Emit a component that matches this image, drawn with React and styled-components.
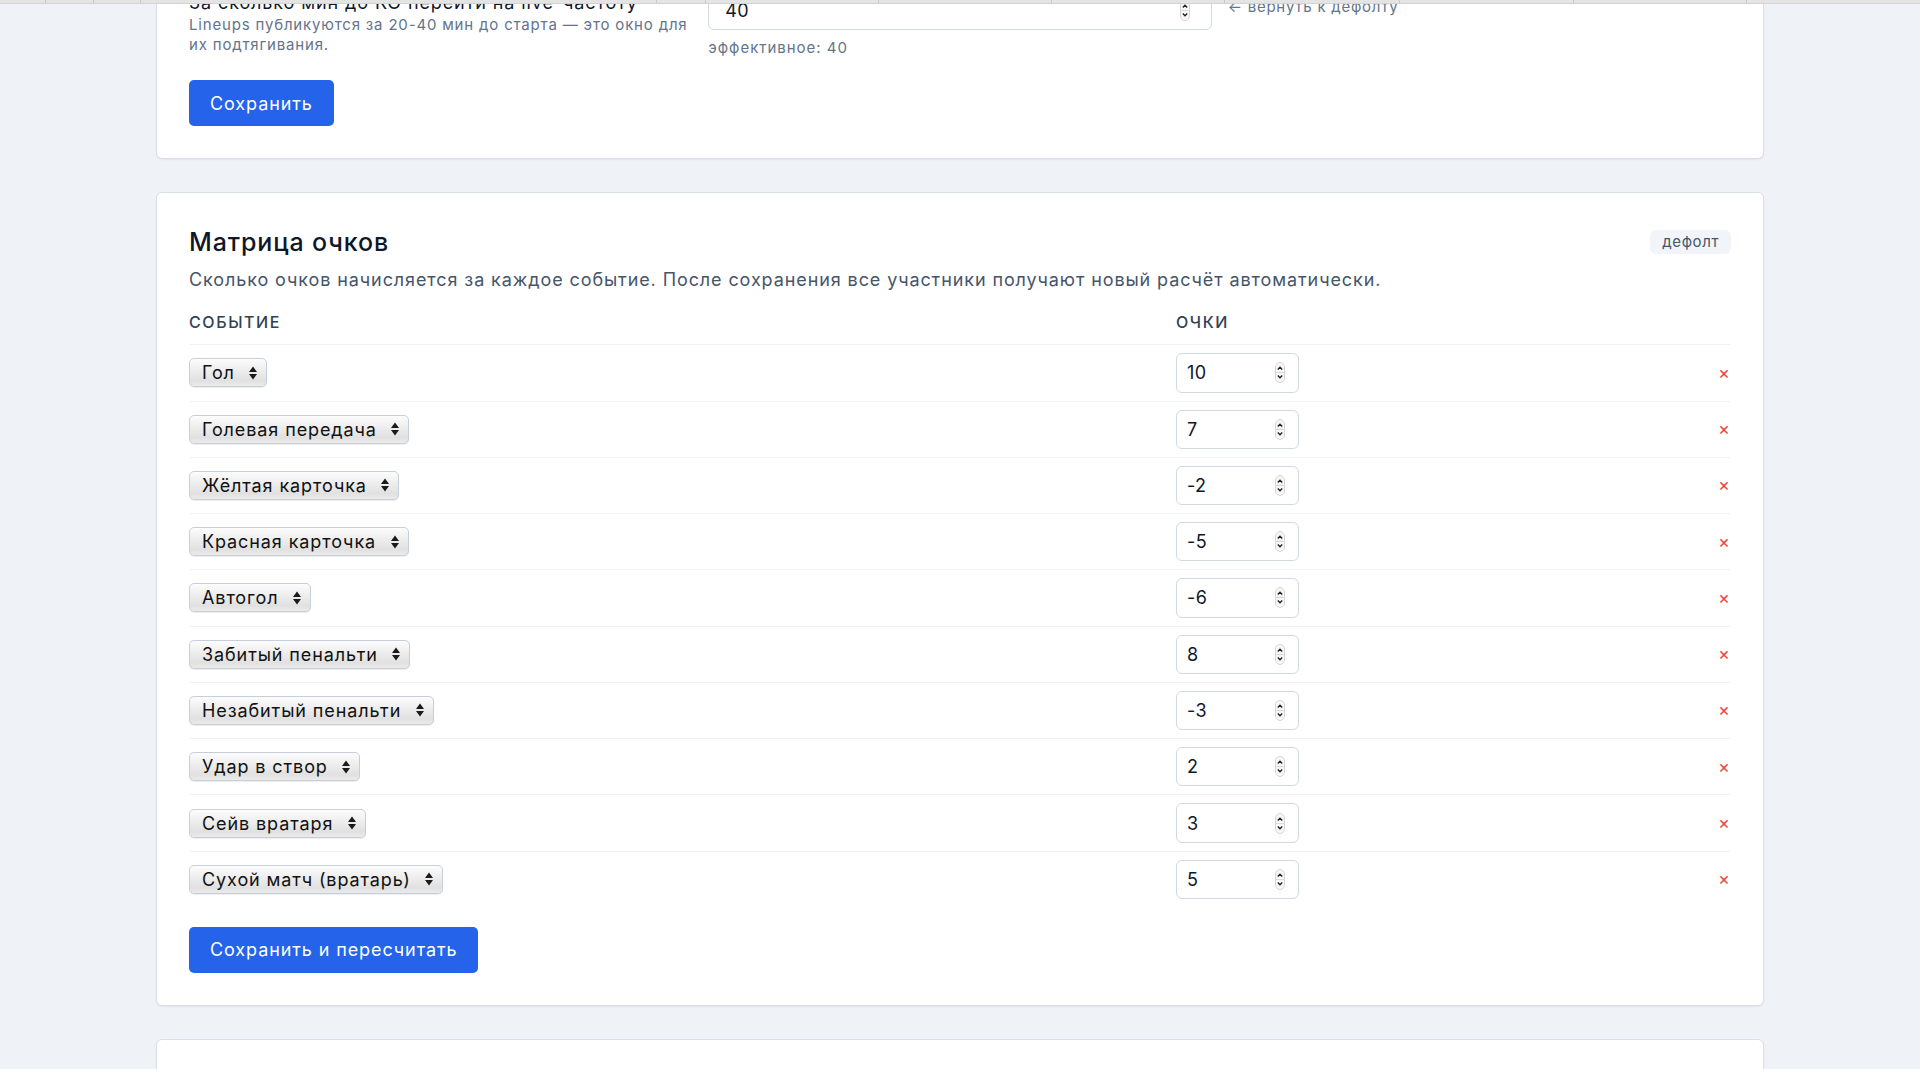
import React, { useState } from 'react';
import styled, { createGlobalStyle } from 'styled-components';

const GlobalStyle = createGlobalStyle`
    html, body {
        margin: 0;
        padding: 0;
        background: #eff3f8;
        overflow: hidden;
    }
    body {
        font-family: Inter, "Noto Sans", sans-serif;
        color: #0f172a;
    }
    * {
        box-sizing: border-box;
    }
`;

// bottom edge of the sticky bar that the page is scrolled under
const TopStrip = styled.div`
    position: fixed;
    top: 0;
    left: 0;
    right: 0;
    height: 4px;
    display: flex;
    background: #e4e4e4;
    border-bottom: 1px solid #d3d3d3;
    z-index: 10;
`;

const StripCell = styled.div`
    width: ${p => p.w}px;
    flex: ${p => (p.last ? 1 : 'none')};
    border-right: ${p => (p.last ? 'none' : '1px solid #c9c9c9')};
`;

const Page = styled.main`
    max-width: 1608px;
    margin: -42px auto 0;
`;

const Card = styled.section`
    background: #fff;
    border: 1px solid #d8dfe9;
    border-radius: 6px;
    box-shadow: 0 1px 2px rgba(15, 23, 42, 0.06);
    padding: 32px;
    margin-bottom: 33px;
    min-height: ${p => p.minH || 0}px;
`;

const FieldRow = styled.div`
    display: grid;
    grid-template-columns: 1fr 1fr 1fr;
    gap: 16px;
    align-items: start;
`;

const FieldLabel = styled.div`
    font-size: 18px;
    line-height: 24px;
    letter-spacing: 0.05em;
    color: #0f172a;
`;

const Hint = styled.div`
    font-size: 15px;
    line-height: 20px;
    letter-spacing: 0.055em;
    color: #64748b;
`;

const Effective = styled(Hint)`
    margin-top: 8px;
    letter-spacing: 0.065em;
`;

const ResetLink = styled.a`
    display: block;
    margin-top: 6px;
    font-size: 15px;
    line-height: 20px;
    letter-spacing: 0.05em;
    color: #64748b;
    text-decoration: none;
    cursor: pointer;
`;

const NumberBox = styled.label`
    display: flex;
    align-items: center;
    width: ${p => (p.wide ? '100%' : '123px')};
    height: 39.27px;
    border: 1px solid #cfd8e3;
    border-radius: 6px;
    background: #fff;
    padding: ${p => (p.wide ? '0 21px 0 16px' : '0 13px 0 10px')};
`;

const NumberInput = styled.input`
    flex: 1;
    min-width: 0;
    border: none;
    outline: none;
    background: transparent;
    font-family: inherit;
    font-size: 18px;
    letter-spacing: 0.02em;
    color: #0f172a;
    padding: 0;
    -moz-appearance: textfield;

    &::-webkit-inner-spin-button,
    &::-webkit-outer-spin-button {
        -webkit-appearance: none;
        margin: 0;
    }
`;

const Button = styled.button`
    display: inline-flex;
    align-items: center;
    height: 46px;
    margin-top: ${p => p.mt || 0}px;
    padding: 0 21px;
    border: none;
    border-radius: 5px;
    background: #2563eb;
    color: #fff;
    font-family: inherit;
    font-size: 18px;
    letter-spacing: 0.05em;
    cursor: pointer;
`;

const TitleRow = styled.div`
    display: flex;
    align-items: center;
    justify-content: space-between;
`;

const Title = styled.h2`
    margin: 0;
    font-size: 25px;
    line-height: 34px;
    font-weight: 500;
    letter-spacing: 0.035em;
    color: #0f172a;
`;

const Badge = styled.span`
    padding: 2px 12px;
    line-height: 20px;
    border-radius: 6px;
    background: #f1f5f9;
    color: #475569;
    font-size: 15px;
    letter-spacing: 0.04em;
`;

const Description = styled.p`
    margin: 9px 0 0;
    font-size: 18px;
    line-height: 24px;
    letter-spacing: 0.05em;
    color: #475569;
`;

const Matrix = styled.table`
    width: 100%;
    margin-top: 11px;
    border-collapse: collapse;
    table-layout: fixed;

    th {
        padding: 9px 0 12px;
        line-height: 20px;
        text-align: left;
        font-size: 16px;
        font-weight: 500;
        letter-spacing: 0.1em;
        text-transform: uppercase;
        color: #334155;
    }

    tbody tr {
        border-top: 1px solid #eef2f6;
    }

    td {
        padding: 8px 0;
        vertical-align: middle;
    }
`;

const RemoveCell = styled.td`
    text-align: right;
`;

const RemoveButton = styled.button`
    border: none;
    background: none;
    padding: 0 1px 0 0;
    color: #ef4444;
    font-family: inherit;
    font-size: 18px;
    line-height: 1;
    cursor: pointer;
`;

const SelectBox = styled.label`
    display: inline-flex;
    align-items: center;
    height: 29px;
    padding-right: 9px;
    border: 1px solid #c5cedb;
    border-radius: 5px;
    background: linear-gradient(#fdfdfd, #eeeeee 40%, #e1e1e1 80%, #ebebeb);
    box-shadow: 0 1px 1px rgba(0, 0, 0, 0.07);
`;

const Select = styled.select`
    appearance: none;
    -webkit-appearance: none;
    border: none;
    outline: none;
    background: transparent;
    font-family: inherit;
    font-size: 18px;
    letter-spacing: 0.05em;
    color: #111;
    padding: 0 14px 0 12px;
    height: 27px;
`;

function SelectArrows() {
    return (
        <svg width="8" height="14" viewBox="0 0 8 14" style={{ pointerEvents: 'none' }}>
            <path d="M4 0.5 L8 6 H0 Z" fill="#1a1a1a" />
            <path d="M0 8 H8 L4 13.5 Z" fill="#1a1a1a" />
        </svg>
    );
}

function Spinner() {
    return (
        <svg width="10" height="21" viewBox="0 0 10 21">
            <rect x="0.5" y="0.5" width="9" height="20" rx="4.5" fill="#f7f7f7" stroke="#d6d6d6" />
            <line x1="1" y1="10.5" x2="9" y2="10.5" stroke="#dcdcdc" />
            <path d="M2.8 7.4 L5 5.2 L7.2 7.4" fill="none" stroke="#222" strokeWidth="1.4" />
            <path d="M2.8 13.6 L5 15.8 L7.2 13.6" fill="none" stroke="#222" strokeWidth="1.4" />
        </svg>
    );
}

const initialRows = [
    ['Гол', 10],
    ['Голевая передача', 7],
    ['Жёлтая карточка', -2],
    ['Красная карточка', -5],
    ['Автогол', -6],
    ['Забитый пенальти', 8],
    ['Незабитый пенальти', -3],
    ['Удар в створ', 2],
    ['Сейв вратаря', 3],
    ['Сухой матч (вратарь)', 5],
];

const strip = [46, 48, 47, 516, 49, 173, 173, 173, 175, 174, 173, 0];

function App() {
    const [rows, setRows] = useState(initialRows);
    const [liveMin, setLiveMin] = useState(40);

    const setPoints = (i, v) => {
        setRows(rows.map((r, j) => (j === i ? [r[0], v] : r)));
    };

    return (
        <>
            <GlobalStyle />
            <TopStrip>
                {strip.map((w, i) => (
                    <StripCell key={i} w={w} last={i === strip.length - 1} />
                ))}
            </TopStrip>
            <Page>
                <Card>
                    <FieldRow>
                        <div>
                            <FieldLabel>За сколько мин до KO перейти на live-частоту</FieldLabel>
                            <Hint>Lineups публикуются за 20-40 мин до старта — это окно для их подтягивания.</Hint>
                        </div>
                        <div>
                            <NumberBox wide>
                                <NumberInput type="number" value={liveMin} onChange={e => setLiveMin(e.target.value)} />
                                <Spinner />
                            </NumberBox>
                            <Effective>эффективное: 40</Effective>
                        </div>
                        <div>
                            <ResetLink>← вернуть к дефолту</ResetLink>
                        </div>
                    </FieldRow>
                    <Button mt={22}>Сохранить</Button>
                </Card>

                <Card>
                    <TitleRow>
                        <Title>Матрица очков</Title>
                        <Badge>дефолт</Badge>
                    </TitleRow>
                    <Description>
                        Сколько очков начисляется за каждое событие. После сохранения все участники получают новый расчёт автоматически.
                    </Description>
                    <Matrix>
                        <colgroup>
                            <col style={{ width: 987 }} />
                            <col />
                            <col style={{ width: 40 }} />
                        </colgroup>
                        <thead>
                            <tr>
                                <th>Событие</th>
                                <th>Очки</th>
                                <th></th>
                            </tr>
                        </thead>
                        <tbody>
                            {rows.map(([name, pts], i) => (
                                <tr key={name}>
                                    <td>
                                        <SelectBox>
                                            <Select value={name} onChange={() => {}}>
                                                <option>{name}</option>
                                            </Select>
                                            <SelectArrows />
                                        </SelectBox>
                                    </td>
                                    <td>
                                        <NumberBox>
                                            <NumberInput type="number" value={pts} onChange={e => setPoints(i, e.target.value)} />
                                            <Spinner />
                                        </NumberBox>
                                    </td>
                                    <RemoveCell>
                                        <RemoveButton>×</RemoveButton>
                                    </RemoveCell>
                                </tr>
                            ))}
                        </tbody>
                    </Matrix>
                    <Button mt={20}>Сохранить и пересчитать</Button>
                </Card>

                <Card minH={320} />
            </Page>
        </>
    );
}

export default App;
